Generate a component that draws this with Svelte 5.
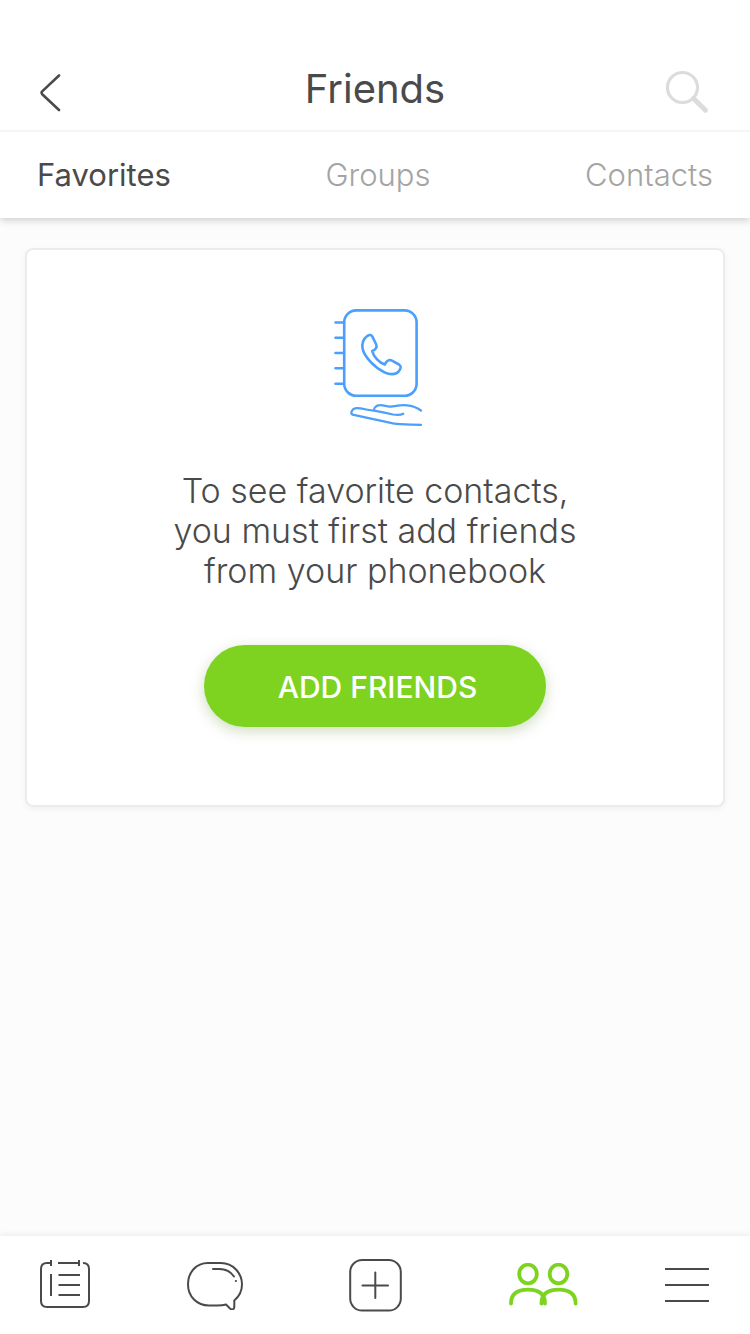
<script>
  const tabs = ['Favorites', 'Groups', 'Contacts'];
  let active = $state('Favorites');
</script>

<div class="screen">
  <header>
    <div class="bar">
      <button class="icon" aria-label="Back">
        <svg width="22" height="40" viewBox="0 0 22 40" fill="none" stroke="#4a4a4a" stroke-width="2.6" stroke-linecap="round" stroke-linejoin="round">
          <path d="M19 3.500 2.200 19.400Q1 20.800 2.200 22.200L19 38" />
        </svg>
      </button>
      <h1>Friends</h1>
      <button class="icon" aria-label="Search">
        <svg width="44" height="44" viewBox="0 0 44 44" fill="none" stroke="#dcdcdc">
          <circle cx="16.5" cy="17.5" r="15" stroke-width="3.2" />
          <path d="M27.500 28.500 39.500 40.200" stroke-width="5" stroke-linecap="round" />
        </svg>
      </button>
    </div>
    <nav class="tabs" aria-label="Friend lists">
      {#each tabs as tab}
        <button class:active={active === tab} onclick={() => (active = tab)}>{tab}</button>
      {/each}
    </nav>
  </header>

  <main>
    <section class="card">
      <svg class="book" width="90" height="118" viewBox="333 308 90 118" fill="none" stroke="#4aa0fc" stroke-width="2.6" stroke-linecap="round" stroke-linejoin="round" aria-hidden="true">
        <rect x="344.2" y="310.4" width="72.4" height="85.4" rx="12" />
        <path d="M335.5 322.5h8M335.5 337.8h8M335.5 353h8M335.5 368.3h8M335.5 383.7h8" />
        <path d="M367.5 335.8C369.5 334.500 371.5 334.8 372.5 336.8L376.2 344.5C377.3 347 375.5 350.2 372.2 351C373.5 356.5 379 362.8 384.8 364.5C386.3 360.6 389.3 359.2 392 360.6L399 364.5C401.500 366 401 369 398.500 371.6C395.5 375 389.5 374.8 384.5 372.3C374.5 367.3 364 356.5 362.6 348.5C361.8 343.5 363.2 339 367.5 335.8Z" />
        <path stroke-width="2.2" d="M421 424.8C410 424.3 402 424.8 393 423.3L352.5 414.7C350 413 352 408.6 356 408.2C362 408 368 410.3 374 410.7C381 411.8 388 413.3 393 414.5C397 415 401 415 403.3 413.7M374 410.7C373.5 408 376 405.3 380 405.2C384 405 387 407 391 406.6C397 405.8 401 404.8 407 405.3C413 405.8 418 408.3 421 410.5" />
      </svg>
      <p>To see favorite contacts,<br />you must first add friends<br />from your phonebook</p>
      <button class="add">ADD FRIENDS</button>
    </section>
  </main>

  <nav class="dock" aria-label="Main">
    <button aria-label="Feed">
      <svg width="52" height="50" viewBox="39 1260 52 50" fill="none" stroke="#4a4a4a" stroke-width="2">
        <path d="M51 1263h-4q-6 0-6 6v32q0 6 6 6h36q6 0 6-6v-32q0-6-6-6M58 1263h21M51 1260v6M79 1260v6M51 1274v22M58.500 1275H80M58.500 1285H80M58.500 1295H80" />
      </svg>
    </button>
    <button aria-label="Chat">
      <svg width="56" height="50" viewBox="187 1260 56 50" fill="none" stroke="#4a4a4a" stroke-width="2" stroke-linecap="round" stroke-linejoin="round">
        <path d="M208 1263h13C233 1263 242 1273 242 1284.500C242 1291.500 239 1296.500 234.300 1300.500V1307C234.300 1310 231 1310 229.500 1308L226 1304.500C223 1305.500 220 1305.500 217 1305.500H209C197 1305.500 188 1296.500 188 1284.500C188 1272.500 196 1263 208 1263Z" />
        <path d="M213 1269h6C226 1269 231 1272 234 1276.500M235.800 1281h.200" />
      </svg>
    </button>
    <button aria-label="Add">
      <svg width="54" height="54" viewBox="0 0 54 54" fill="none" stroke="#4a4a4a" stroke-width="2" stroke-linecap="round">
        <rect x="1.200" y="2" width="50.600" height="50.600" rx="12" />
        <path d="M26.300 14.500V40M13.500 27.500H39" />
      </svg>
    </button>
    <button aria-label="Friends" aria-current="page">
      <svg width="70" height="44" viewBox="508 1263 70 44" fill="none" stroke="#7ed321" stroke-width="3.800" stroke-linecap="round" stroke-linejoin="round">
        <ellipse cx="528" cy="1274" rx="8.800" ry="9.300" />
        <ellipse cx="558.500" cy="1274" rx="8.800" ry="9.300" />
        <path d="M511 1303.500C511 1294 517 1289.700 528 1289.700C539 1289.700 545 1294 545 1303.500M541.500 1303.500C541.500 1294 547.500 1289.700 558.500 1289.700C569.500 1289.700 575.600 1294 575.600 1303.500" />
      </svg>
    </button>
    <button aria-label="Menu">
      <svg width="44" height="34" viewBox="0 0 44 34" fill="none" stroke="#4a4a4a" stroke-width="2">
        <path d="M0 1H44M0 17H44M0 33H44" />
      </svg>
    </button>
  </nav>
</div>

<style>
  :global(body) {
    margin: 0;
  }
  .screen {
    display: flex;
    flex-direction: column;
    min-height: 100vh;
    box-sizing: border-box;
    background: #fcfcfc;
    color: #4a4a4a;
    font-family: Inter, "Liberation Sans", sans-serif;
  }
  button {
    margin: 0;
    padding: 0;
    border: 0;
    background: none;
    color: inherit;
    font: inherit;
    cursor: pointer;
  }
  svg {
    display: block;
  }
  header {
    background: #fff;
    box-shadow: 0 2px 8px rgba(0, 0, 0, 0.2);
  }
  .bar {
    display: flex;
    align-items: center;
    justify-content: space-between;
    padding: 48px 40px 0;
    height: 82px;
    border-bottom: 2px solid #f5f5f5;
  }
  .icon {
    flex: 1;
    display: flex;
    padding-top: 6px;
  }
  .icon:last-child {
    justify-content: flex-end;
  }
  h1 {
    margin: 0;
    font-size: 40px;
    line-height: 48px;
    font-weight: 400;
  }
  .tabs {
    display: flex;
    justify-content: space-between;
    padding: 0 37px;
  }
  .tabs button {
    font-size: 31px;
    line-height: 86px;
    font-weight: 300;
    color: #a4a4a4;
  }
  .tabs .active {
    font-weight: 400;
    color: #4a4a4a;
  }
  main {
    flex: 1;
    padding: 30px 25px;
  }
  .card {
    display: flex;
    flex-direction: column;
    align-items: center;
    padding: 58px 24px 78px;
    border: 2px solid #ececec;
    border-radius: 8px;
    background: #fff;
    box-shadow: 0 2px 6px rgba(0, 0, 0, 0.05);
  }
  .book {
    margin-left: 6px;
  }
  p {
    margin: 45px 0 54px;
    text-align: center;
    font-size: 34px;
    line-height: 40px;
    font-weight: 300;
  }
  .add {
    padding: 2px 69px 0 74px;
    border-radius: 41px;
    background: #7ed321;
    color: #fff;
    font-size: 30px;
    line-height: 80px;
    font-weight: 500;
    box-shadow: 0 4px 14px rgba(65, 117, 5, 0.25);
  }
  .dock {
    display: grid;
    grid-template-columns: 130fr 170fr 151fr 184fr 104fr;
    padding-right: 11px;
    background: #fff;
    box-shadow: 0 -1px 6px rgba(0, 0, 0, 0.08);
  }
  .dock button {
    display: flex;
    align-items: center;
    justify-content: center;
    height: 98px;
  }
</style>
